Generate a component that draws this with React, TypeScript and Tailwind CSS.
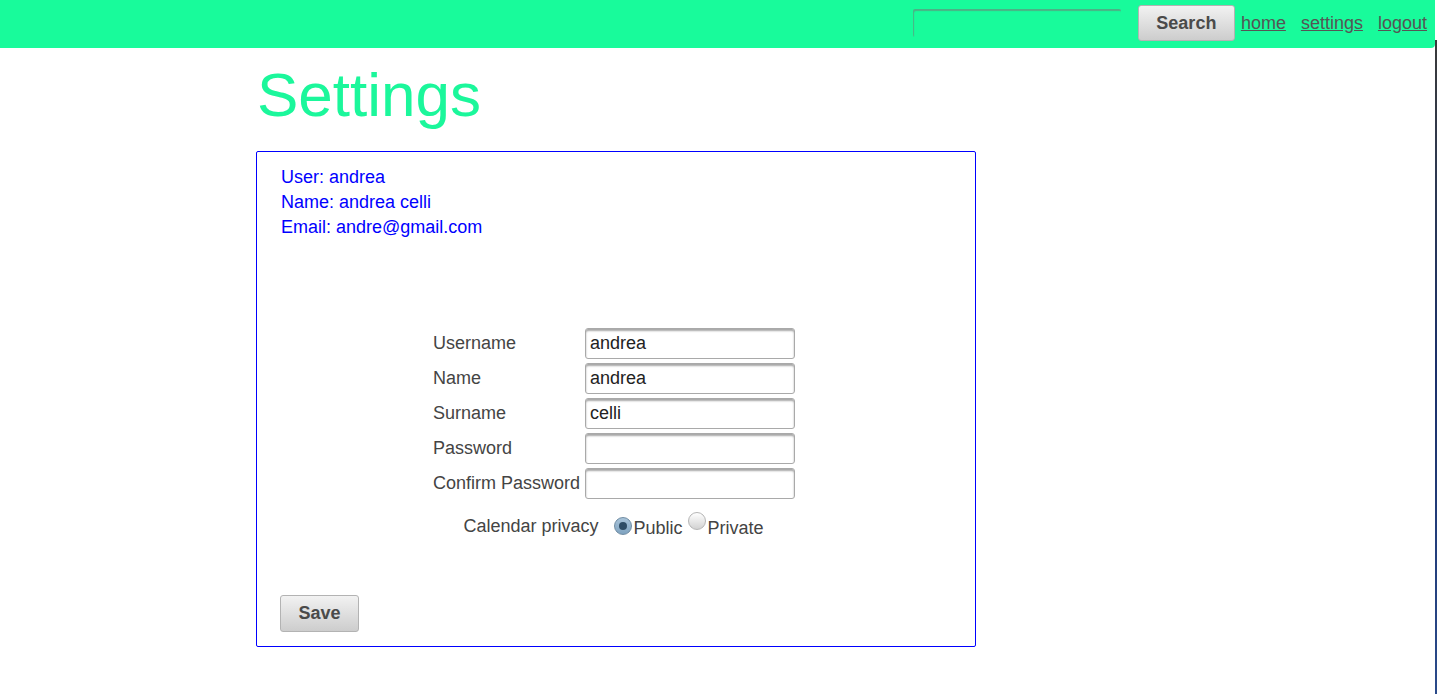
import React from "react";

const font = { fontFamily: '"Liberation Sans", Arial, Helvetica, sans-serif' };

function Field({ label, value }: { label: string; value: string }) {
  return (
    <div className="flex items-center h-[35px]">
      <span className="w-[152px] text-[18px] text-[#444]">{label}</span>
      <div className="w-[210px] h-[31px] border border-[#a9a9a9] rounded-[3px] shadow-[inset_0_2px_2px_rgba(0,0,0,0.35)] bg-white flex items-center px-[4px] text-[18px] text-[#222]">
        {value}
      </div>
    </div>
  );
}

function Radio({ checked }: { checked: boolean }) {
  return checked ? (
    <span className="inline-flex items-center justify-center w-[18px] h-[18px] rounded-full border border-[#6f8ca3] bg-gradient-to-b from-[#a9c4da] to-[#7fa3c0]">
      <span className="w-[8px] h-[8px] rounded-full bg-[#2f4d66]" />
    </span>
  ) : (
    <span className="inline-block w-[18px] h-[18px] rounded-full border border-[#b5b5b5] bg-gradient-to-b from-[#ffffff] to-[#d2d2d2]" />
  );
}

export default function App() {
  return (
    <div className="flex w-[1437px] min-h-[694px] bg-white" style={font}>
      <div className="flex-1 flex flex-col">
        <header className="h-[48px] bg-[#18fb9b] rounded-br-[4px] flex items-center justify-end pr-[8px]">
          <div className="w-[208px] h-[28px] mt-[-2px] rounded-[2px] shadow-[inset_1px_2px_1px_rgba(110,130,120,0.6)]" />
          <button className="ml-[17px] mt-[-2px] w-[97px] h-[36px] rounded-[3px] border border-[#b3b3b3] bg-gradient-to-b from-[#f2f2f2] to-[#cdcdcd] text-[18px] font-bold text-[#4a4a4a]">
            Search
          </button>
          <a className="ml-[6px] mt-[-1px] text-[18px] text-[#555] underline">home</a>
          <a className="ml-[15px] mt-[-1px] text-[18px] text-[#555] underline">settings</a>
          <a className="ml-[15px] mt-[-1px] text-[18px] text-[#555] underline">logout</a>
        </header>
        <main className="pl-[256px]">
          <h1 className="text-[62px] leading-[62px] text-[#1bf79b] pl-[1px] mt-[16px]">Settings</h1>
          <section className="mt-[25px] w-[720px] h-[496px] border border-[#0000ff] rounded-[2px] flex flex-col">
            <div className="pl-[24px] pt-[13px] text-[18px] leading-[25px] text-[#0000ff]">
              <div>User: andrea</div>
              <div>Name: andrea celli</div>
              <div>Email: andre@gmail.com</div>
            </div>
            <div className="mt-[86px] flex flex-col items-center">
              <div className="flex flex-col ml-[-4px]">
                <Field label="Username" value="andrea" />
                <Field label="Name" value="andrea" />
                <Field label="Surname" value="celli" />
                <Field label="Password" value="" />
                <Field label="Confirm Password" value="" />
              </div>
              <div className="mt-[14px] flex items-center ml-[-5px] text-[18px] text-[#444]">
                <span className="mt-[-4px]">Calendar privacy</span>
                <span className="ml-[15px] mt-[-8px]"><Radio checked /></span>
                <span className="ml-[2px]">Public</span>
                <span className="ml-[5px] mt-[-8px]"><Radio checked={false} /></span>
                <span className="ml-[2px]">Private</span>
              </div>
            </div>
            <div className="mt-auto pl-[23px] pb-[14px]">
              <button className="w-[79px] h-[37px] rounded-[3px] border border-[#b3b3b3] bg-gradient-to-b from-[#f2f2f2] to-[#cdcdcd] text-[18px] font-bold text-[#4a4a4a]">
                Save
              </button>
            </div>
          </section>
        </main>
      </div>
      <div className="w-[2px] mt-[40px] bg-gradient-to-b from-[#3a3a3a] via-[#1a2f6a] to-[#2a4a8a]" />
    </div>
  );
}
